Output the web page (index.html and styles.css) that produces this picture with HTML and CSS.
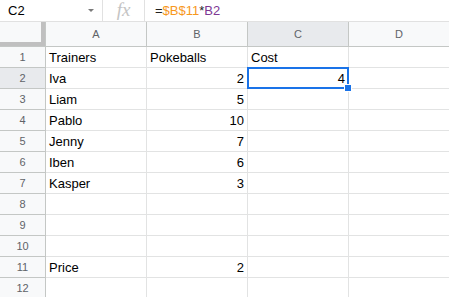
FILE: index.html
```html
<!DOCTYPE html>
<html lang="en">
<head>
    <meta charset="UTF-8">
    <title>Trainers</title>
    <link rel="stylesheet" href="styles.css">
</head>
<body>
    <div class="formula-bar">
        <div class="name-box">
            <span class="cell-ref">C2</span>
            <span class="caret"></span>
        </div>
        <div class="fx">fx</div>
        <div class="formula">=<span class="ref-orange">$B$11</span>*<span class="ref-purple">B2</span></div>
    </div>
    <div class="sheet">
        <div class="corner"></div>
        <div class="col-head">A</div>
        <div class="col-head">B</div>
        <div class="col-head selected">C</div>
        <div class="col-head">D</div>

        <div class="row-head">1</div>
        <div class="cell">Trainers</div>
        <div class="cell">Pokeballs</div>
        <div class="cell">Cost</div>
        <div class="cell"></div>

        <div class="row-head selected">2</div>
        <div class="cell">Iva</div>
        <div class="cell num">2</div>
        <div class="cell num active">4<span class="handle"></span></div>
        <div class="cell"></div>

        <div class="row-head">3</div>
        <div class="cell">Liam</div>
        <div class="cell num">5</div>
        <div class="cell"></div>
        <div class="cell"></div>

        <div class="row-head">4</div>
        <div class="cell">Pablo</div>
        <div class="cell num">10</div>
        <div class="cell"></div>
        <div class="cell"></div>

        <div class="row-head">5</div>
        <div class="cell">Jenny</div>
        <div class="cell num">7</div>
        <div class="cell"></div>
        <div class="cell"></div>

        <div class="row-head">6</div>
        <div class="cell">Iben</div>
        <div class="cell num">6</div>
        <div class="cell"></div>
        <div class="cell"></div>

        <div class="row-head">7</div>
        <div class="cell">Kasper</div>
        <div class="cell num">3</div>
        <div class="cell"></div>
        <div class="cell"></div>

        <div class="row-head">8</div>
        <div class="cell"></div>
        <div class="cell"></div>
        <div class="cell"></div>
        <div class="cell"></div>

        <div class="row-head">9</div>
        <div class="cell"></div>
        <div class="cell"></div>
        <div class="cell"></div>
        <div class="cell"></div>

        <div class="row-head">10</div>
        <div class="cell"></div>
        <div class="cell"></div>
        <div class="cell"></div>
        <div class="cell"></div>

        <div class="row-head">11</div>
        <div class="cell">Price</div>
        <div class="cell num">2</div>
        <div class="cell"></div>
        <div class="cell"></div>

        <div class="row-head">12</div>
        <div class="cell"></div>
        <div class="cell"></div>
        <div class="cell"></div>
        <div class="cell"></div>
    </div>
</body>
</html>
```

FILE: styles.css
```css
body {
    margin: 0;
    font-family: "Liberation Sans", Arial, sans-serif;
    color: #000;
    background: #fff;
    overflow: hidden;
}
.formula-bar {
    display: flex;
    align-items: center;
    height: 21px;
    border-bottom: 1px solid #e1e1e1;
}
.name-box {
    display: flex;
    align-items: center;
    width: 103px;
    height: 100%;
    box-sizing: border-box;
    padding-left: 8px;
    border-right: 1px solid #e1e1e1;
}
.cell-ref {
    flex: 1;
    font-size: 13px;
}
.caret {
    width: 0;
    height: 0;
    margin-right: 8px;
    border-left: 3px solid transparent;
    border-right: 3px solid transparent;
    border-top: 3px solid #7a7a7a;
}
.fx {
    width: 42px;
    height: 100%;
    box-sizing: border-box;
    border-right: 1px solid #e1e1e1;
    font-family: "Liberation Serif", serif;
    font-style: italic;
    font-size: 19px;
    line-height: 19px;
    color: #c4c4c4;
    text-align: center;
}
.formula {
    padding-left: 10px;
    font-size: 13px;
    color: #222;
}
.ref-orange {
    color: #f7981d;
}
.ref-purple {
    color: #7e3794;
}
.sheet {
    display: grid;
    grid-template-columns: 46px 101px 101px 101px 101px;
    grid-template-rows: 25px repeat(12, 21px);
}
.corner {
    box-sizing: border-box;
    background: #f8f9fa;
    border-right: 1px solid #c4c7c5;
    border-bottom: 1px solid #c4c7c5;
    box-shadow: inset -4px -4px 0 #c0c0c0;
}
.col-head {
    box-sizing: border-box;
    background: #f8f9fa;
    border-right: 1px solid #c4c7c5;
    border-bottom: 1px solid #c4c7c5;
    color: #5f6368;
    font-size: 11px;
    text-align: center;
    line-height: 24px;
}
.row-head {
    box-sizing: border-box;
    background: #f8f9fa;
    border-right: 1px solid #c4c7c5;
    border-bottom: 1px solid #c4c7c5;
    color: #5f6368;
    font-size: 11px;
    text-align: center;
    line-height: 20px;
}
.selected {
    background: #e8eaed;
}
.cell {
    position: relative;
    box-sizing: border-box;
    padding: 0 3px;
    border-right: 1px solid #e2e3e3;
    border-bottom: 1px solid #e2e3e3;
    font-size: 13px;
    line-height: 21px;
    white-space: nowrap;
}
.num {
    text-align: right;
}
.active::after {
    content: "";
    position: absolute;
    left: -1px;
    top: -1px;
    right: -1px;
    bottom: -1px;
    border: 2px solid #1a73e8;
}
.handle {
    position: absolute;
    right: -4px;
    bottom: -4px;
    width: 6px;
    height: 6px;
    background: #1a73e8;
    border: 1px solid #fff;
    z-index: 1;
}
```
